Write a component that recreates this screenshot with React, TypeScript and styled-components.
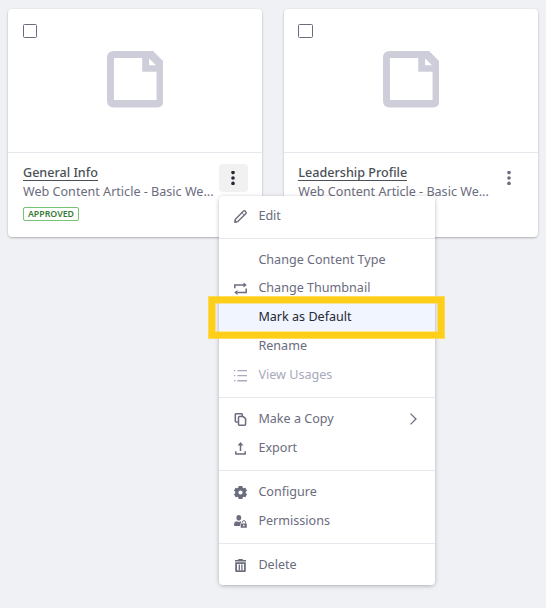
import React from 'react';
import styled, { createGlobalStyle } from 'styled-components';

const GlobalStyle = createGlobalStyle`
  * { box-sizing: border-box; }
  body {
    margin: 0;
    background: #f0f1f5;
    color: #6b6c7e;
    font: 12.58px/19px "Noto Sans", sans-serif;
  }
`;

const Page = styled.main`
  position: relative;
  width: 546px;
  height: 608px;
  padding: 9px 8px;
  overflow: hidden;
`;

const CardGrid = styled.div`
  display: grid;
  grid-template-columns: 254px 254px;
  gap: 22px;
`;

const Card = styled.article`
  height: 228px;
  background: #fff;
  border-radius: 4px;
  box-shadow: 0 1px 3px -1px rgba(0, 0, 0, 0.55), 0 0 2px rgba(0, 0, 0, 0.06);
`;

const Preview = styled.div`
  display: flex;
  align-items: flex-start;
  height: 144px;
  padding: 15px 0 0 15px;
  border-bottom: 1px solid #e7e7ed;
`;

const Checkbox = styled.span<{ $shift?: boolean }>`
  flex: none;
  width: ${(p) => (p.$shift ? 15 : 14)}px;
  height: 14px;
  margin-left: ${(p) => (p.$shift ? -1 : 0)}px;
  border: 1px solid #6b6c7e;
  border-radius: 1.5px;
`;

const DocumentIcon = styled.svg`
  flex: none;
  width: 56.5px;
  height: 56.5px;
  margin: 27px 0 0 69.8px;
`;

const CardBody = styled.div<{ $shift?: boolean }>`
  display: flex;
  padding: 10px 14px 0 ${(p) => (p.$shift ? 14.3 : 15)}px;
`;

const CardText = styled.div<{ $shift?: boolean }>`
  display: flex;
  flex-direction: column;
  align-items: flex-start;
  width: ${(p) => (p.$shift ? 196.7 : 196)}px;
`;

const Title = styled.a`
  height: 18px;
  line-height: 19px;
  color: #495057;
  font-weight: 500;
  border-bottom: 1px solid #495057;
`;

const Subtitle = styled.span`
  line-height: 19px;
  margin-top: 1px;
  white-space: nowrap;
`;

const Status = styled.span`
  display: flex;
  justify-content: center;
  width: 56px;
  height: 14px;
  margin-top: 6px;
  border: 1px solid #76c474;
  border-radius: 2px;
  color: #377b37;
  font-size: 8.8px;
  font-weight: 600;
  line-height: 12px;
`;

const MoreButton = styled.button<{ $active?: boolean }>`
  display: flex;
  align-items: center;
  justify-content: center;
  width: 29px;
  height: 28px;
  margin-top: 1px;
  padding: 0 1px 0 0;
  border: 0;
  border-radius: 4px;
  background: ${(p) => (p.$active ? '#f1f1f2' : 'transparent')};
  color: ${(p) => (p.$active ? '#272833' : '#6b6c7e')};
`;

const Menu = styled.nav`
  position: absolute;
  left: 219px;
  top: 196px;
  width: 216px;
  height: 389px;
  padding-top: 5px;
  background: #fff;
  border-radius: 4px;
  box-shadow: 0 1px 5px -1px rgba(0, 0, 0, 0.4);
`;

const Group = styled.div`
  padding-bottom: 8px;
  & + & {
    padding-top: 6px;
    border-top: 1px solid #e7e7ed;
  }
`;

const MenuItem = styled.div<{ $state?: 'active' | 'disabled'; $compact?: boolean }>`
  display: grid;
  grid-template-columns: 24.4px 1fr 14px;
  align-items: center;
  height: ${(p) => (p.$compact ? 28 : 29)}px;
  padding: 0 15px ${(p) => (p.$compact ? 1 : 0)}px;
  color: ${(p) => (p.$state === 'active' ? '#272833' : p.$state === 'disabled' ? '#a7a9bc' : '#6b6c7e')};
  background: ${(p) => (p.$state === 'active' ? '#f0f5ff' : 'transparent')};
`;

const MenuLabel = styled.span`
  grid-column: 2;
  line-height: 19px;
  white-space: nowrap;
`;

const MenuIcon = styled.svg`
  width: 13px;
  height: 13px;
  grid-column: 1;
  grid-row: 1;
  margin-top: 1px;
`;

const Arrow = styled.svg`
  grid-column: 3;
  width: 14px;
  height: 14px;
  margin-top: 1px;
`;

const Highlight = styled.div`
  position: absolute;
  left: 209px;
  top: 297px;
  width: 235px;
  height: 41px;
  border: 6px solid #ffce18;
  box-shadow: 0 0 0 1px rgba(255, 206, 24, 0.7), inset 0 0 0 1px rgba(255, 206, 24, 0.45);
`;

const icons = {
  edit: (
    <g fill="none" stroke="currentColor" strokeWidth="1.4" strokeLinejoin="round">
      <path d="M.9 12.1 1.4 9.2 9.3 1.3Q10.3.4 11.3 1.3l.4.4q1 1 0 2L3.8 11.6Z" />
      <path d="M8 2.8 10.2 5" strokeWidth=".9" />
      <path d="M.4 12.7 .8 9.8 3.2 12.2Z" fill="currentColor" stroke="none" />
    </g>
  ),
  swap: (
    <g fill="none" stroke="currentColor" strokeWidth="1.5">
      <path d="M.8 6.2V3h9.2M12.2 6.6V10.5H3.4" />
      <path d="M9.5.5 12.8 3 9.5 5.4ZM3.5 8.1.2 10.5l3.3 2.5Z" fill="currentColor" stroke="none" />
    </g>
  ),
  list: (
    <path
      d="M0 1h1.3v1.2H0zm3.4 0H13v1.2H3.4zM0 6h1.3v1.3H0zm3.4 0H13v1.3H3.4zM0 11h1.3v1.5H0zm3.4 0H13v1.5H3.4z"
      fill="currentColor"
    />
  ),
  copy: (
    <g fill="none" stroke="currentColor" strokeWidth="1.5" strokeLinejoin="round">
      <path d="M3.8 9H2.2Q1.3 9 1.3 8.1V1.6Q1.3.7 2.2.7h5.1q.9 0 .9.9v1.6" />
      <path d="M5.4 3.6h3.9l2.3 2v5.7q0 .9-.9.9H5.4q-.9 0-.9-.9V4.5q0-.9.9-.9Z" />
    </g>
  ),
  export: (
    <g fill="none" stroke="currentColor" strokeWidth="1.5" strokeLinejoin="round">
      <path d="M1.8 9.2v2.9h9.4V9.2M6.5 9V1.5" />
      <path d="M6.5 0 9.4 3.4H3.6Z" fill="currentColor" stroke="none" />
    </g>
  ),
  gear: (
    <path
      fill="currentColor"
      fillRule="evenodd"
      d="M4.7 0h3.6l.4 1.6 1 .6 1.7-.5L13 4.7l-1.3 1.2v1.2L13 8.3l-1.6 3-1.7-.5-1 .6-.4 1.6H4.7l-.4-1.6-1-.6-1.7.5L0 8.3l1.3-1.2V5.9L0 4.7l1.6-3 1.7.5 1-.6ZM6.5 4.4a2.1 2.1 0 1 0 0 4.2 2.1 2.1 0 0 0 0-4.2Z"
    />
  ),
  permissions: (
    <g fill="currentColor">
      <ellipse cx="4.8" cy="2.8" rx="2.4" ry="2.8" />
      <path d="M0 9.2Q.2 6.5 2.8 6.3q2 1.2 4 0L7.5 7Q6.3 7.6 6 11H.8Q0 11 0 10.2Z" />
      <path fillRule="evenodd" d="M6.7 8.4h6.1v4.3H6.7Zm2.4 1.3v1.6h1.4V9.7Z" />
      <path d="M8.3 7.4q0-1.8 1.6-1.8t1.6 1.8v1.2" fill="none" stroke="currentColor" strokeWidth="1" />
    </g>
  ),
  trash: (
    <g fill="none" stroke="currentColor">
      <path d="M1 1.7h11M4.2.6h4.6" strokeWidth="1.5" />
      <path d="M2.1 4.2h8.8v7.6q0 .4-.4.4h-8q-.4 0-.4-.4Z" strokeWidth="1.8" />
      <path d="M5.3 5.5v5.5M7.9 5.5v5.5" strokeWidth="1.3" />
    </g>
  ),
};

type Item = {
  label: string;
  icon?: keyof typeof icons;
  state?: 'active' | 'disabled';
  submenu?: boolean;
  compact?: boolean;
};

const groups: Item[][] = [
  [{ label: 'Edit', icon: 'edit' }],
  [
    { label: 'Change Content Type' },
    { label: 'Change Thumbnail', icon: 'swap', compact: true },
    { label: 'Mark as Default', state: 'active' },
    { label: 'Rename' },
    { label: 'View Usages', icon: 'list', state: 'disabled' },
  ],
  [
    { label: 'Make a Copy', icon: 'copy', submenu: true },
    { label: 'Export', icon: 'export' },
  ],
  [
    { label: 'Configure', icon: 'gear' },
    { label: 'Permissions', icon: 'permissions' },
  ],
  [{ label: 'Delete', icon: 'trash' }],
];

function ContentCard({ title, approved, active, shift }: { title: string; approved?: boolean; active?: boolean; shift?: boolean }) {
  return (
    <Card>
      <Preview>
        <Checkbox $shift={shift} />
        <DocumentIcon viewBox="0 0 57 57">
          <path
            fill="#cdced9"
            fillRule="evenodd"
            d="M7 0H46.5L57 10.5V50Q57 57 50 57H7Q0 57 0 50V7Q0 0 7 0ZM7 7V49.5H50V21H35.5V7ZM42.5 7.5V14.3H49.5Z"
          />
        </DocumentIcon>
      </Preview>
      <CardBody $shift={shift}>
        <CardText $shift={shift}>
          <Title>{title}</Title>
          <Subtitle>Web Content Article - Basic We...</Subtitle>
          {approved && <Status>APPROVED</Status>}
        </CardText>
        <MoreButton $active={active} aria-label="More actions">
          <svg width="4" height="14" viewBox="0 0 4 14" fill="currentColor">
            <circle cx="2" cy="1.6" r="1.8" />
            <circle cx="2" cy="7" r="1.8" />
            <circle cx="2" cy="12.4" r="1.8" />
          </svg>
        </MoreButton>
      </CardBody>
    </Card>
  );
}

export default function App() {
  return (
    <Page>
      <GlobalStyle />
      <CardGrid>
        <ContentCard title="General Info" approved active />
        <ContentCard title="Leadership Profile" shift />
      </CardGrid>
      <Menu>
        {groups.map((group) => (
          <Group key={group[0].label}>
            {group.map((item) => (
              <MenuItem key={item.label} $state={item.state} $compact={item.compact}>
                {item.icon && <MenuIcon viewBox="0 0 13 13">{icons[item.icon]}</MenuIcon>}
                <MenuLabel>{item.label}</MenuLabel>
                {item.submenu && (
                  <Arrow viewBox="0 0 14 14">
                    <path d="M4.5 1.6 10 7l-5.5 5.4" fill="none" stroke="currentColor" strokeWidth="1.3" />
                  </Arrow>
                )}
              </MenuItem>
            ))}
          </Group>
        ))}
      </Menu>
      <Highlight />
    </Page>
  );
}
